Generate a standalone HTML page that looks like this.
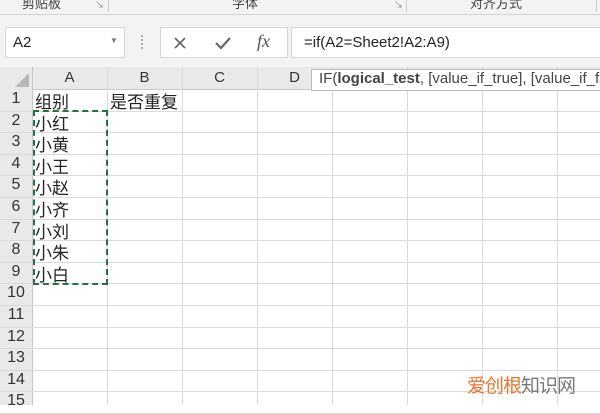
<!DOCTYPE html><html><head><style>
body{margin:0;width:600px;height:405px;overflow:hidden;background:#fff;font-family:"Liberation Sans","Noto Sans CJK SC",sans-serif;position:relative}
.a{position:absolute}
.top{left:0;top:0;width:600px;height:67px;background:#f3f3f3}
.rib{left:0;top:0;width:600px;height:14px;border-bottom:1px solid #d4d4d4;background:#f3f3f3;font-size:13px;color:#444;overflow:hidden}
.box{background:#fff;border:1px solid #d6d6d6}
.hdr{background:#e9e9e9;color:#333;font-size:15px;text-align:center}
.cell{font-size:17px;color:#222}
</style></head><body>
<div class="a top"></div>
<div class="a rib">
<span class="a" style="left:22px;top:-7px">剪贴板</span>
<span class="a" style="left:95px;top:-2px;font-size:9px;color:#888">↘</span>
<div class="a" style="left:108px;top:0;width:1px;height:12px;background:#ccc"></div>
<span class="a" style="left:232px;top:-7px">字体</span>
<span class="a" style="left:394px;top:-2px;font-size:9px;color:#888">↘</span>
<div class="a" style="left:406px;top:0;width:1px;height:12px;background:#ccc"></div>
<span class="a" style="left:470px;top:-7px">对齐方式</span>
<div class="a" style="left:596px;top:0;width:1px;height:12px;background:#ccc"></div>
</div>
<div class="a box" style="left:5px;top:27px;width:118px;height:29px"><span class="a" style="left:7px;top:6px;font-size:15px;color:#222">A2</span><span class="a" style="left:104px;top:8px;font-size:8px;color:#777">▼</span></div>
<div class="a" style="left:141px;top:35px;width:2px;height:14px;border-left:2px dotted #aaa"></div>
<div class="a box" style="left:160px;top:27px;width:126px;height:29px">
<svg class="a" style="left:12px;top:8px" width="14" height="14"><path d="M2 2L12 12M12 2L2 12" stroke="#666" stroke-width="1.6"/></svg>
<svg class="a" style="left:53px;top:7px" width="18" height="16"><path d="M2 8L7 13L16 3" stroke="#666" stroke-width="2.2" fill="none"/></svg>
<span class="a" style="left:96px;top:3px;font-family:'Liberation Serif',serif;font-style:italic;font-size:18px;color:#555">fx</span>
</div>
<div class="a box" style="left:291px;top:27px;width:320px;height:29px"><span class="a" style="left:12px;top:6px;font-size:15px;color:#222">=if(A2=Sheet2!A2:A9)</span></div>
<div class="a hdr" style="left:0;top:67px;width:600px;height:22px;border-bottom:1px solid #c8c8c8"></div>
<svg class="a" style="left:14px;top:72px" width="16" height="16"><path d="M15 1L15 15L1 15Z" fill="#b8b8b8"/></svg>
<div class="a" style="left:0;top:89px;width:32px;height:316px;background:#e9e9e9;border-right:1px solid #c8c8c8"></div>
<div id="g"></div>
<script>
var h='',cols=['A','B','C','D'];
for(var i=0;i<8;i++){var x=32+i*75;h+='<div class="a" style="left:'+x+'px;top:67px;width:1px;height:338px;background:'+(i==0?'#c8c8c8':'#dadada')+'"></div>';if(i<4)h+='<div class="a hdr" style="left:'+x+'px;top:69px;width:75px;background:none">'+cols[i]+'</div>';}
for(var r=1;r<=15;r++){var y=89+(r-1)*21.6;h+='<div class="a" style="left:0;top:'+(y+21.6)+'px;width:600px;height:1px;background:#dadada"></div>';h+='<div class="a hdr" style="left:0;top:'+(y+1)+'px;width:32px;background:none;font-size:16px">'+r+'</div>';}
var t=['组别','小红','小黄','小王','小赵','小齐','小刘','小朱','小白'];
for(var k=0;k<9;k++)h+='<div class="a cell" style="left:35px;top:'+(88+k*21.6)+'px">'+t[k]+'</div>';
h+='<div class="a cell" style="left:110px;top:88px">是否重复</div>';
document.getElementById('g').innerHTML=h;
</script>
<div class="a" style="left:33px;top:110px;width:71px;height:171px;border:2px dashed #217346"></div>
<div class="a" style="left:311px;top:69px;width:300px;height:20px;background:#fff;border:1px solid #bbb;font-size:15px;color:#444;white-space:nowrap;overflow:hidden"><span style="position:relative;left:7px;top:0px">IF(<b>logical_test</b>, [value_if_true], [value_if_false])</span></div>
<div class="a" style="left:467px;top:371px;font-size:19px;white-space:nowrap;letter-spacing:-1px"><span style="color:#e8762c">爱创根</span><span style="color:#777">知识网</span></div>
</body></html>
